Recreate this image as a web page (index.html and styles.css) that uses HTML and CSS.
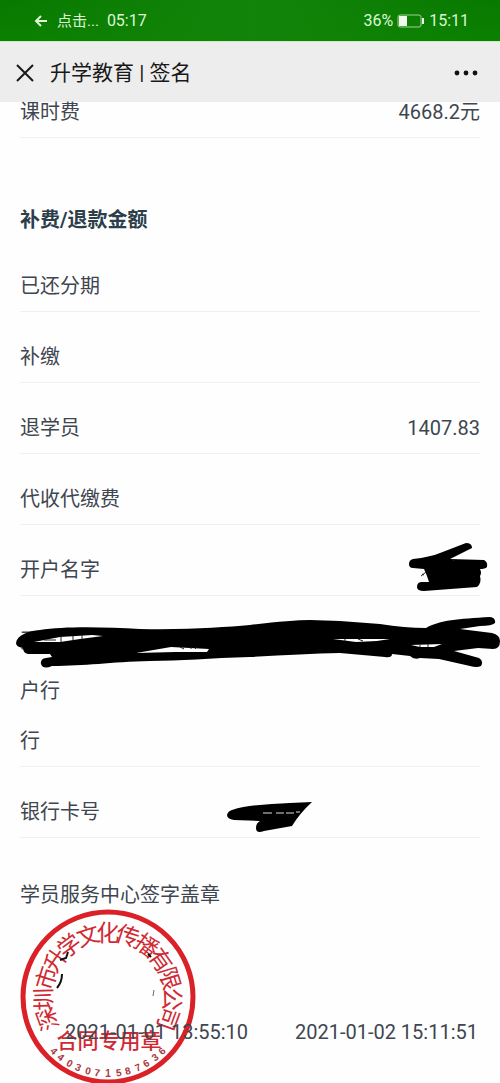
FILE: index.html
```html
<!DOCTYPE html>
<html lang="zh-CN">
<head>
<meta charset="utf-8">
<meta name="viewport" content="width=device-width, initial-scale=1">
<title>升学教育 | 签名</title>
<link rel="stylesheet" href="styles.css">
</head>
<body>
<div class="status">
  <div class="status-group">
    <svg class="back" viewBox="0 0 14 14" aria-hidden="true"><path d="M13 7H2M7 2L2 7l5 5"/></svg>
    <span class="status-label">点击...</span>
    <span>05:17</span>
  </div>
  <div class="status-group status-right">
    <span>36%</span>
    <svg class="battery" viewBox="0 0 28 14" aria-hidden="true"><rect class="shell" x="1" y="1" width="23" height="12" rx="2"/><rect class="fill" x="2" y="2" width="8" height="10"/><rect class="fill" x="25" y="4" width="2" height="6"/></svg>
    <span>15:11</span>
  </div>
</div>
<header class="bar">
  <button class="icon-button" type="button" aria-label="关闭"><svg class="close" viewBox="0 0 18 18"><path d="M1 1l16 16M17 1L1 17"/></svg></button>
  <h1 class="title">升学教育 | 签名</h1>
  <button class="icon-button" type="button" aria-label="更多"><svg class="more" viewBox="0 0 24 6"><circle cx="3" cy="3" r="2.4"/><circle cx="12" cy="3" r="2.4"/><circle cx="21" cy="3" r="2.4"/></svg></button>
</header>
<main class="content">
  <div class="row row-first"><span>课时费</span><span>4668.2元</span></div>
  <h2 class="section-title">补费/退款金额</h2>
  <div class="row"><span>已还分期</span></div>
  <div class="row"><span>补缴</span></div>
  <div class="row"><span>退学员</span><span>1407.83</span></div>
  <div class="row"><span>代收代缴费</span></div>
  <div class="row"><span>开户名字</span>
    <svg class="mark mark-name" viewBox="408 542 80 52" aria-hidden="true">
      <path class="solid" d="M413 560Q430 558 440 554L466 544Q472 544 472 549L450 560L484 561Q488 563 487 568Q485 570 480 570Q482 574 480 577Q482 584 477 588L424 592Q417 592 417 588Q417 583 422 583L429 583L427 577L424 570L413 569Q409 569 409 565Q409 561 413 560Z"/>
      <path class="letter" d="M426 573l-5 4M424 576l-2-1M452 560l2 2"/>
    </svg>
  </div>
  <div class="row row-bank"><span>开<br>户行<br>行</span>
    <svg class="mark mark-bank" viewBox="16 617 484 52" aria-hidden="true">
      <path class="solid" d="M16 644C17 636 28 632 40 631C65 627 105 628 140 630C190 631 225 628 250 626Q290 621 310 621L340 622L380 625Q405 629 426 629C440 621 458 620 490 618Q496 619 495 624Q492 627 480 627L460 630L492 634Q500 636 500 642Q500 650 493 650L478 649L454 652L479 659Q484 662 481 667Q477 669 470 667L439 660L420 659Q414 661 410 657L392 655Q392 659 385 658L340 654Q300 655 250 658C210 659 180 662 150 662C110 663 85 667 52 667Q43 671 41 665Q40 660 46 659L52 658L50 655L28 655Q23 654 23 649Q16 648 16 644Z"/>
      <path class="gap" d="M34 643L60 638L92 636L103 637L80 640L60 643Z"/>
      <path class="gap" d="M136 654L171 648L209 650L207 653L175 653Z"/>
      <path class="gap" d="M333 640L390 640L377 642L356 643Z"/>
      <path class="gap" d="M411 646L442 645L434 648L420 648Z"/>
      <path class="letter" d="M44 641h12M61 637v6M73 637v4M82 636v4M180 648l4 2M191 648v2M197 648l-2 2M345 640v2M358 640l5 2M420 646v2M428 645v3"/>
    </svg>
  </div>
  <div class="row"><span>银行卡号</span>
    <svg class="mark mark-card" viewBox="226 802 88 32" aria-hidden="true"><path class="solid" d="M232 811C248 806 270 805 290 804L312 803Q300 814 292 827L264 832Q256 835 256 829Q256 824 260 822L234 821Q227 820 227 816Q228 812 232 811Z"/><path class="slit" d="M263 814h9M276 814h8M286 814h8M296 813h4"/></svg>
  </div>
  <section class="signature">
    <h2 class="signature-title">学员服务中心签字盖章</h2>
    <div class="stamp-area">
      <svg class="seal" viewBox="20 909 176 174" role="img" aria-label="合同专用章">
        <circle class="ring" cx="108" cy="997" r="85"/>
        <g class="company">
          <text x="108" y="941" transform="rotate(-110 108 997)">深</text>
          <text x="108" y="941" transform="rotate(-92 108 997)">圳</text>
          <text x="108" y="941" transform="rotate(-73 108 997)">市</text>
          <text x="108" y="941" transform="rotate(-55 108 997)">升</text>
          <text x="108" y="941" transform="rotate(-37 108 997)">学</text>
          <text x="108" y="941" transform="rotate(-18 108 997)">文</text>
          <text x="108" y="941">化</text>
          <text x="108" y="941" transform="rotate(18 108 997)">传</text>
          <text x="108" y="941" transform="rotate(37 108 997)">播</text>
          <text x="108" y="941" transform="rotate(55 108 997)">有</text>
          <text x="108" y="941" transform="rotate(73 108 997)">限</text>
          <text x="108" y="941" transform="rotate(92 108 997)">公</text>
          <text x="108" y="941" transform="rotate(110 108 997)">司</text>
        </g>
        <text class="purpose" x="109" y="1048">合同专用章</text>
        <g class="serial">
          <text x="108" y="1077" transform="rotate(45 108 997)">4</text>
          <text x="108" y="1077" transform="rotate(38 108 997)">4</text>
          <text x="108" y="1077" transform="rotate(30 108 997)">0</text>
          <text x="108" y="1077" transform="rotate(23 108 997)">3</text>
          <text x="108" y="1077" transform="rotate(15 108 997)">0</text>
          <text x="108" y="1077" transform="rotate(8 108 997)">7</text>
          <text x="108" y="1077">1</text>
          <text x="108" y="1077" transform="rotate(-8 108 997)">5</text>
          <text x="108" y="1077" transform="rotate(-15 108 997)">8</text>
          <text x="108" y="1077" transform="rotate(-23 108 997)">7</text>
          <text x="108" y="1077" transform="rotate(-30 108 997)">6</text>
          <text x="108" y="1077" transform="rotate(-38 108 997)">3</text>
          <text x="108" y="1077" transform="rotate(-45 108 997)">6</text>
        </g>
        <path class="pen" d="M68 952l-2 6-6 2M62 974q0 8-5 14M148 954l3 3"/>
        <path class="pen-thin" d="M154 990l-1 6"/>
      </svg>
      <div class="dates"><time datetime="2021-01-01T13:55:10">2021-01-01 13:55:10</time><time datetime="2021-01-02T15:11:51">2021-01-02 15:11:51</time></div>
    </div>
  </section>
</main>
</body>
</html>
```
FILE: styles.css
```css
* { box-sizing: border-box; }
body {
  margin: 0;
  background: #fefefe;
  color: #3e4650;
  font-family: Roboto, "Noto Sans CJK SC", sans-serif;
  font-size: 20px;
  line-height: 20px;
}
h1, h2 { margin: 0; font-size: inherit; font-weight: 400; }
svg { display: block; }

.status {
  display: flex;
  justify-content: space-between;
  align-items: center;
  height: 42px;
  padding: 1px 31px 0 34px;
  border-bottom: 1px solid #c5efc0;
  background: linear-gradient(90deg, #08700000 0%, #128409 50%, #08700000 100%), linear-gradient(#087900, #0b8000);
  color: #dcf6d6;
  font-size: 16px;
}
.status-group { display: flex; align-items: center; gap: 8px; }
.status-right { gap: 4px; }
.status-label { font-size: 15px; }
.back { width: 14px; height: 14px; margin-right: 1px; fill: none; stroke: #dcf6d6; stroke-width: 2; }
.battery { width: 28px; height: 14px; }
.shell { fill: none; stroke: #9bd592; stroke-width: 1; }
.fill { fill: #effced; }

.bar {
  display: flex;
  align-items: center;
  height: 60px;
  padding: 2px 22px 0 16px;
  background: #ededed;
  color: #191919;
}
.title { flex: 1; padding-left: 16px; font-size: 21px; line-height: 28px; }
.icon-button { padding: 0; border: 0; background: none; }
.close { width: 18px; height: 18px; fill: none; stroke: #191919; stroke-width: 2; }
.more { width: 24px; height: 6px; fill: #111; }

.content { padding: 0 20px; }
.row {
  position: relative;
  display: flex;
  justify-content: space-between;
  padding: 35px 0 15px;
  border-bottom: 1px solid #f1f1f1;
}
.row-first { padding-top: 0; }
.row-bank { padding: 20px 0 0; line-height: 50px; }
.section-title { padding: 72px 0 11px; color: #2c3e4a; font-weight: 700; }

.mark { position: absolute; }
.mark-name { right: -8px; top: 16px; width: 80px; height: 52px; }
.mark-bank { right: -20px; top: 20px; width: 484px; height: 52px; }
.mark-card { left: 206px; top: 34px; width: 88px; height: 32px; }
.solid { fill: #000; }
.gap { fill: #fefefe; }
.letter { fill: none; stroke: #222; stroke-width: 1; }
.slit { fill: none; stroke: #ddd; stroke-width: 1; }

.signature-title { padding-top: 47px; }
.stamp-area { display: grid; margin-top: 4px; }
.seal, .dates { grid-area: 1 / 1; }
.seal { width: 176px; height: 174px; }
.ring { fill: none; stroke: #da2128; stroke-width: 5; }
.company, .purpose, .serial { fill: #cf2a33; text-anchor: middle; }
.company { font-size: 23px; }
.purpose { font-size: 21px; font-weight: 500; }
.serial { font-family: "Liberation Sans", sans-serif; font-size: 10px; font-weight: 700; fill: #a93942; }
.pen { fill: none; stroke: #111; stroke-width: 2; }
.pen-thin { fill: none; stroke: #667; stroke-width: 1; }
.dates {
  z-index: 1;
  display: flex;
  justify-content: space-between;
  align-self: end;
  padding: 0 2px 41px 45px;
}
```
